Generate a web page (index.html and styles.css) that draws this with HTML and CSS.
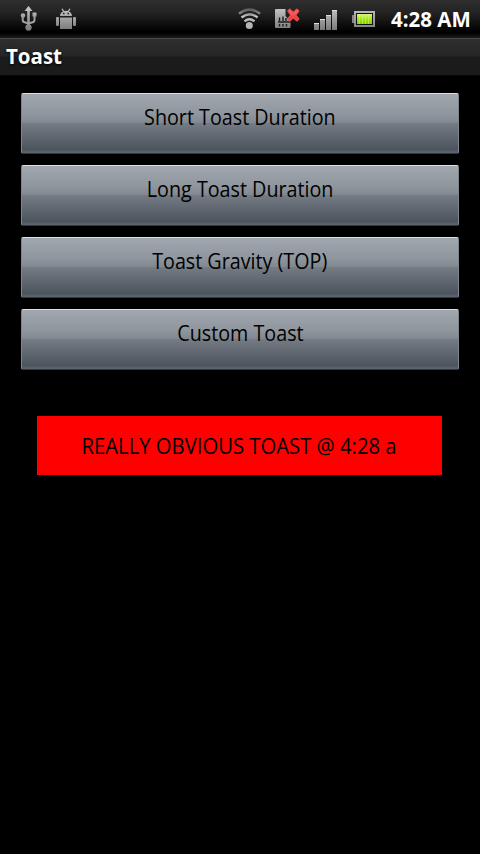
FILE: index.html
```html
<!DOCTYPE html>
<html lang="en">
<head>
<meta charset="utf-8">
<title>Toast</title>
<link rel="stylesheet" href="styles.css">
</head>
<body>
<header class="status">
  <svg class="status-icons" width="380" height="38" viewBox="0 0 380 38" aria-hidden="true">
    <defs>
      <linearGradient id="metal" gradientUnits="userSpaceOnUse" x1="0" y1="7" x2="0" y2="31">
        <stop offset="0" stop-color="#c8c8c8"/><stop offset="1" stop-color="#777"/>
      </linearGradient>
      <linearGradient id="waves" gradientUnits="userSpaceOnUse" x1="0" y1="8" x2="0" y2="29">
        <stop offset="0" stop-color="#555"/><stop offset=".2" stop-color="#777"/><stop offset=".4" stop-color="#c4c4c4"/><stop offset="1" stop-color="#aaa"/>
      </linearGradient>
      <linearGradient id="charge" x1="0" y1="0" x2="0" y2="1">
        <stop offset="0" stop-color="#d5f580"/><stop offset=".5" stop-color="#a5e41b"/><stop offset="1" stop-color="#83cf00"/>
      </linearGradient>
      <linearGradient id="cross" x1="0" y1="0" x2="0" y2="1">
        <stop offset="0" stop-color="#ff8583"/><stop offset="1" stop-color="#e51e20"/>
      </linearGradient>
    </defs>
    <g fill="url(#metal)">
      <path d="M28.500 6l4 5h-2.700v13.500a3 3 0 1 1-2.600 0V11h-2.700z"/>
      <circle cx="23" cy="15.500" r="2.200"/><path d="M32.500 12.500h4v4h-4z"/>
      <circle cx="28.500" cy="27.800" r="3"/>
    </g>
    <path d="M22.700 15v5q0 2 2 2.200l3.500 1.300M34.500 15v5q0 2-2 2.200l-4 1.300" fill="none" stroke="#a0a0a0" stroke-width="2"/>
    <g fill="url(#metal)">
      <path d="M60 16q0-3 3-4.500L61.500 9l1-.5 1.700 2.500q1.800-.5 3.600 0l1.700-2.500 1 .5-1.500 2.500q3 1.500 3 4.500z"/>
      <path d="M60 17.500h12V29H60z"/><rect x="56" y="17" width="3" height="9" rx="1"/><rect x="73" y="17" width="3" height="9" rx="1"/>
    </g>
    <path d="M63 13.500h1.500M67.500 13.500H69" stroke="#222" stroke-width="1.300"/>
    <g fill="none" stroke="url(#waves)" stroke-width="2.400">
      <path d="M239 13.500q10.500-8 21 0"/><path d="M241.500 17.500q8-6.500 16 0"/><path d="M244.500 21.300q5-4.300 10 0"/>
    </g>
    <circle cx="249.300" cy="25.500" r="3.500" fill="#b5b5b5"/>
    <path d="M275 10q0-1 1-1h9.500v7l5 5v6q0 1-1 1H276q-1 0-1-1z" fill="url(#metal)"/>
    <path d="M279.500 17.500v3.500M283 16.500v4.500M286 18v3M278 22h13M279.500 24v2.500M283 24v2.500M286.500 24v2.500" stroke="#1c1c1c" stroke-width="1.400" fill="none"/>
    <path d="M288 11l1.700-1.700 3.600 3.300 3.600-3.300 1.700 1.700-3 4 3 4-1.700 1.700-3.600-3.300-3.600 3.300-1.700-1.700 3-4z" fill="url(#cross)" stroke="#f04c4e" stroke-width="1.600" stroke-linejoin="round"/>
    <g fill="url(#metal)"><path d="M314 23h5v7h-5zM320 19h5v11h-5zM326 15h5v15h-5zM332 10h5v20h-5z"/></g>
    <path d="M314 23.500h5M320 19.500h5M326 15.500h5M332 10.500h5" stroke="#ddd"/>
    <path d="M352 15h3v8h-3z" fill="#858585"/>
    <path d="M355 12h19v14h-19z" fill="#111" stroke="url(#metal)" stroke-width="2"/>
    <path d="M357 14h15v10h-15z" fill="url(#charge)"/>
    <path d="M359.500 14v10M362.500 14v10M365.500 14v10M368.500 14v10" stroke="#e0ff80" stroke-opacity=".45"/>
  </svg>
  <span class="clock">4:28 AM</span>
</header>
<div class="titlebar"><h1 class="title">Toast</h1></div>
<main class="content">
  <button class="btn"><span class="label">Short Toast Duration</span></button>
  <button class="btn"><span class="label">Long Toast Duration</span></button>
  <button class="btn"><span class="label">Toast Gravity (TOP)</span></button>
  <button class="btn"><span class="label">Custom Toast</span></button>
  <div class="toast"><span class="label message">REALLY OBVIOUS TOAST @ 4:28 a</span></div>
</main>
</body>
</html>
```
FILE: styles.css
```css
* { box-sizing: border-box; }
body {
  margin: 0;
  min-height: 854px;
  background: #000;
  font-family: "Open Sans", "Noto Sans", sans-serif;
  overflow: hidden;
}
.status {
  display: flex;
  height: 38px;
  background: linear-gradient(#2e2e2e 0, #242424 12px, #000 32px, #050505 34px, #1c1c1c 38px);
}
.status-icons { flex: none; }
.clock {
  margin-left: 11px;
  color: #fff;
  font-size: 21px;
  font-weight: 700;
  line-height: 39px;
  white-space: nowrap;
  transform: scaleX(.975);
  transform-origin: left;
}
.titlebar {
  height: 38px;
  padding-left: 6px;
  border-top: 1px solid #4a4a4a;
  border-bottom: 1px solid #080808;
  background: linear-gradient(#2e2e2e 0, #262626 17px, #1b1b1b 18px, #1b1b1b 100%);
}
.title {
  display: inline-block;
  margin: 0;
  color: #fff;
  font-size: 21px;
  font-weight: 700;
  line-height: 34px;
  text-shadow: 0 1px 3px #000;
  transform: scaleX(.975);
  transform-origin: left;
}
.content {
  display: flex;
  flex-direction: column;
  gap: 11px;
  padding: 17px 21px 0;
}
.btn {
  display: flex;
  justify-content: center;
  height: 61px;
  padding: 0;
  border: 1px solid;
  border-color: #dde0e3 #7d858d #343a40 #7d858d;
  border-radius: 2px;
  background: linear-gradient(#a1a7af 0, #8f969e 20px, #81888f 29px, #757c84 29px, #4b535d 56px, #5b646e 58px, #5b646e 100%);
  color: #000;
  font: inherit;
}
.label {
  font-size: 22px;
  line-height: 30px;
  white-space: nowrap;
  transform: scaleX(.896);
}
.btn .label { margin-top: 7px; }
.toast {
  display: flex;
  justify-content: center;
  width: 405px;
  height: 59px;
  margin: 35px 0 0 16px;
  padding-top: 14px;
  background: #f00;
  color: #000;
}
.message { transform: scaleX(.921); }
```
